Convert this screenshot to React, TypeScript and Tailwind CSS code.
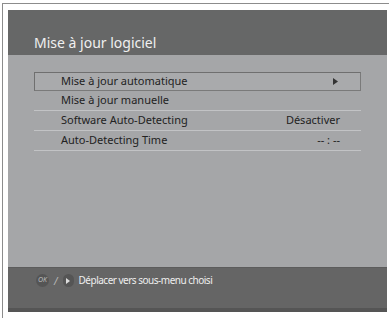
const rows = [
  { label: 'Mise à jour manuelle', value: '' },
  { label: 'Software Auto-Detecting', value: 'Désactiver' },
  { label: 'Auto-Detecting Time', value: '-- : --' },
];

export default function App() {
  return (
    <div className="w-[389px] h-[318px] bg-white pt-[3px] pl-[2px] font-['Noto_Sans',sans-serif]">
      <div className="h-[315px] border-l border-t border-[#8c8c8c] pl-[5px] pt-[6px]">
        <div className="w-[379px]">
          <div className="h-[45px] bg-[#666767] flex flex-col justify-end pb-[3px]">
            <div className="ml-[26px] text-[14px] leading-[18px] text-[#f0f0f0]">
              Mise à jour logiciel
            </div>
          </div>

          <div className="h-[212px] bg-[#a5a6a8] pt-[17px] pl-[26px]">
            <div className="w-[327px] text-[11px] text-[#222]">
              <div className="h-[19px] flex items-center justify-between border border-t-[#6f6f6f] border-l-[#6f6f6f] border-b-[#7a7a7a] border-r-[#7a7a7a] bg-[#a9aaac] pl-[26px] pr-[22px]">
                <span>Mise à jour automatique</span>
                <svg width="5" height="7" viewBox="0 0 5 7" className="fill-[#333]">
                  <path d="M0 0 L5 3.5 L0 7 Z" />
                </svg>
              </div>
              {rows.map((row, index) => (
                <div
                  key={index}
                  className="h-[20px] flex items-center justify-between border-b border-[#c2c3c5] pl-[27px] pr-[21px]"
                >
                  <span>{row.label}</span>
                  <span>{row.value}</span>
                </div>
              ))}
            </div>
          </div>

          <div className="h-[45px] bg-[#656565] border-t border-[#5c5c5c] border-b-4 border-b-[#555] flex items-start pt-[6px] pl-[28px] gap-[5px] text-[10px] text-[#eee]">
            <span className="w-[13px] h-[13px] rounded-full bg-[#555] flex items-center justify-center text-[7px] italic text-[#bbb]">
              OK
            </span>
            <span className="text-[#bbb] italic">/</span>
            <span className="w-[11px] h-[13px] rounded-full bg-[#555] flex items-center justify-center">
              <svg width="4" height="6" viewBox="0 0 4 6" className="fill-[#ddd]">
                <path d="M0 0 L4 3 L0 6 Z" />
              </svg>
            </span>
            <span className="tracking-[-0.5px] leading-[13px]">Déplacer vers sous-menu choisi</span>
          </div>
        </div>
      </div>
    </div>
  );
}
